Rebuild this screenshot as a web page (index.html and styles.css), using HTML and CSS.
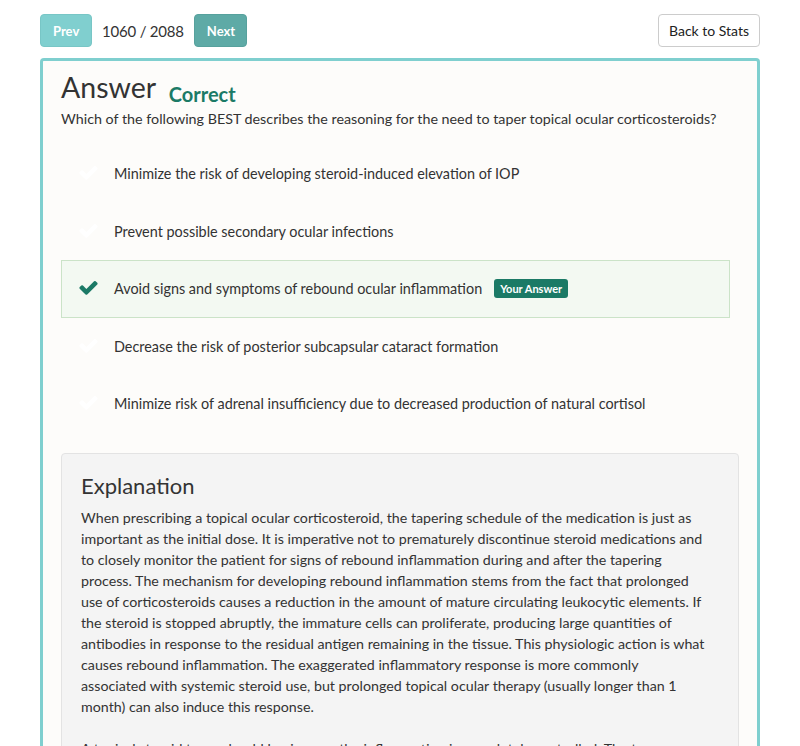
FILE: index.html
```html
<!DOCTYPE html>
<html>
<head>
<meta charset="utf-8">
<link rel="stylesheet" href="styles.css">
</head>
<body>
<div class="page">
  <div class="topbar">
    <div class="nav">
      <button class="btn btn-prev">Prev</button>
      <span class="counter">1060 / 2088</span>
      <button class="btn btn-next">Next</button>
    </div>
    <button class="btn btn-back">Back to Stats</button>
  </div>
  <div class="panel">
    <h2 class="title">Answer <span class="status">Correct</span></h2>
    <p class="question">Which of the following BEST describes the reasoning for the need to taper topical ocular corticosteroids?</p>
    <ul class="options">
      <li class="option"><svg class="check" viewBox="0 0 1792 1792"><path d="M1671 566q0 40-28 68l-724 724-136 136q-28 28-68 28t-68-28l-136-136-362-362q-28-28-28-68t28-68l136-136q28-28 68-28t68 28l294 295 656-657q28-28 68-28t68 28l136 136q28 28 28 68z"/></svg><span>Minimize the risk of developing steroid-induced elevation of IOP</span></li>
      <li class="option"><svg class="check" viewBox="0 0 1792 1792"><path d="M1671 566q0 40-28 68l-724 724-136 136q-28 28-68 28t-68-28l-136-136-362-362q-28-28-28-68t28-68l136-136q28-28 68-28t68 28l294 295 656-657q28-28 68-28t68 28l136 136q28 28 28 68z"/></svg><span>Prevent possible secondary ocular infections</span></li>
      <li class="option selected"><svg class="check" viewBox="0 0 1792 1792"><path d="M1671 566q0 40-28 68l-724 724-136 136q-28 28-68 28t-68-28l-136-136-362-362q-28-28-28-68t28-68l136-136q28-28 68-28t68 28l294 295 656-657q28-28 68-28t68 28l136 136q28 28 28 68z"/></svg><span>Avoid signs and symptoms of rebound ocular inflammation</span><span class="badge">Your Answer</span></li>
      <li class="option"><svg class="check" viewBox="0 0 1792 1792"><path d="M1671 566q0 40-28 68l-724 724-136 136q-28 28-68 28t-68-28l-136-136-362-362q-28-28-28-68t28-68l136-136q28-28 68-28t68 28l294 295 656-657q28-28 68-28t68 28l136 136q28 28 28 68z"/></svg><span>Decrease the risk of posterior subcapsular cataract formation</span></li>
      <li class="option"><svg class="check" viewBox="0 0 1792 1792"><path d="M1671 566q0 40-28 68l-724 724-136 136q-28 28-68 28t-68-28l-136-136-362-362q-28-28-28-68t28-68l136-136q28-28 68-28t68 28l294 295 656-657q28-28 68-28t68 28l136 136q28 28 28 68z"/></svg><span>Minimize risk of adrenal insufficiency due to decreased production of natural cortisol</span></li>
    </ul>
    <div class="explanation">
      <h3 class="exp-title">Explanation</h3>
      <p>When prescribing a topical ocular corticosteroid, the tapering schedule of the medication is just as important as the initial dose. It is imperative not to prematurely discontinue steroid medications and to closely monitor the patient for signs of rebound inflammation during and after the tapering process. The mechanism for developing rebound inflammation stems from the fact that prolonged use of corticosteroids causes a reduction in the amount of mature circulating leukocytic elements. If the steroid is stopped abruptly, the immature cells can proliferate, producing large quantities of antibodies in response to the residual antigen remaining in the tissue. This physiologic action is what causes rebound inflammation. The exaggerated inflammatory response is more commonly associated with systemic steroid use, but prolonged topical ocular therapy (usually longer than 1 month) can also induce this response.</p>
      <p>A topical steroid taper should begin once the inflammation is completely controlled. The taper should be gradual and the patient should be monitored closely for any recurrence of inflammation.</p>
    </div>
  </div>
</div>
</body>
</html>
```

FILE: styles.css
```css
* { box-sizing: border-box; }
html, body { margin: 0; padding: 0; background: #fff; }
body {
  font-family: Lato, "Open Sans", sans-serif;
  color: #333;
  font-size: 14px;
}
.page {
  padding: 14px 40px 0 40px;
}
.topbar {
  display: flex;
  justify-content: space-between;
  align-items: center;
  height: 33px;
}
.nav {
  display: flex;
  align-items: center;
}
.btn {
  font-family: Lato, sans-serif;
  height: 33px;
  border-radius: 4px;
  border: 1px solid transparent;
  padding: 0 12px;
  cursor: pointer;
}
.btn-prev {
  width: 52px;
  background: #80cfcf;
  border-color: #78c6c6;
  color: #fff;
  font-weight: bold;
  font-size: 13px;
}
.btn-next {
  width: 53px;
  background: #5eaaa6;
  border-color: #57a19d;
  color: #fff;
  font-weight: bold;
  font-size: 13px;
}
.counter {
  font-size: 15px;
  margin: 0 10px;
  color: #333;
  letter-spacing: -0.2px;
}
.btn-back {
  width: 102px;
  background: #fff;
  border-color: #ccc;
  color: #222;
  font-size: 14px;
  padding: 0;
}
.panel {
  margin-top: 11px;
  border: 3px solid #7fcfcf;
  border-bottom: none;
  border-radius: 4px 4px 0 0;
  background: #fdfcfa;
  padding: 10px 18px 0 18px;
  min-height: 700px;
}
.title {
  margin: 0;
  font-size: 28.5px;
  font-weight: normal;
  line-height: 32px;
  color: #333;
}
.status {
  font-size: 20px;
  font-weight: bold;
  color: #1b7a66;
  margin-left: 6px;
  position: relative;
  top: 4px;
}
.question {
  margin: 3px 0 0 0;
  font-size: 14.3px;
  line-height: 20px;
}
.options {
  list-style: none;
  margin: 16px 9px 0 0;
  padding: 0;
}
.option {
  display: flex;
  align-items: center;
  height: 57.5px;
  padding: 0 16px;
  border: 1px solid transparent;
  font-size: 14.4px;
}
.option.selected {
  background: #f3f9f2;
  border-color: #cbe3c8;
}
.check {
  width: 21px;
  height: 21px;
  fill: #ffffff;
  margin-right: 15px;
  flex: none;
  position: relative;
  top: -1px;
}
.selected .check { fill: #1b7a66; }
.badge {
  background: #1b7a66;
  color: #fff;
  font-size: 11px;
  font-weight: bold;
  padding: 3px 6px;
  border-radius: 3px;
  margin-left: 12px;
  line-height: 13px;
}
.explanation {
  margin-top: 20px;
  background: #f4f4f4;
  border: 1px solid #e3e3e3;
  border-radius: 4px;
  padding: 19px 33px 20px 19px;
}
.exp-title {
  margin: 0 0 8px 0;
  font-size: 22px;
  font-weight: normal;
  line-height: 26px;
}
.explanation p {
  margin: 0 0 21px 0;
  font-size: 14.25px;
  line-height: 21px;
}
```
